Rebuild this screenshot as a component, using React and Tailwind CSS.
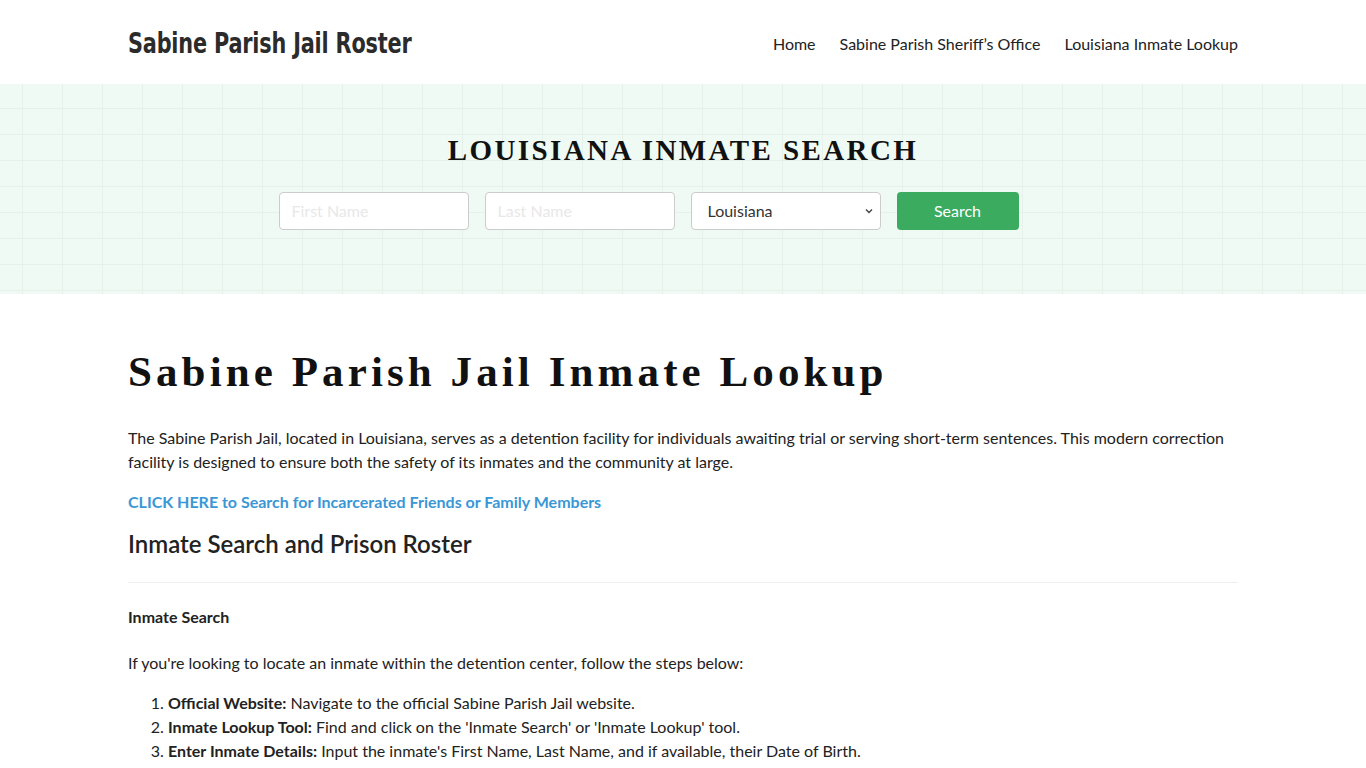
import React from 'react';

const lato = { fontFamily: 'Lato, "Open Sans", sans-serif' };

function Header() {
  return (
    <header className="h-[84px] bg-white">
      <div className="mx-auto flex h-full w-[1110px] items-center justify-between pt-[3px]">
        <div className="origin-left scale-x-[0.825] whitespace-nowrap font-['DejaVu_Sans_Condensed',sans-serif] text-[28px] font-bold tracking-[-0.2px] text-[#2b2b2b]">
          Sabine Parish Jail Roster
        </div>
        <nav className="flex items-center gap-6 text-[16px] text-[#222]">
          <a href="#">Home</a>
          <a href="#">Sabine Parish Sheriff’s Office</a>
          <a href="#">Louisiana Inmate Lookup</a>
        </nav>
      </div>
    </header>
  );
}

function Hero() {
  return (
    <section className="h-[210px] bg-[#eefaf3] bg-[linear-gradient(#e4f2ea_1px,transparent_1px),linear-gradient(90deg,#e4f2ea_1px,transparent_1px)] bg-[size:40px_26px] bg-[position:-18px_-2px]">
      <div className="flex flex-col items-center pt-[45px]">
        <h2 className="font-['Liberation_Serif',serif] text-[29px] font-bold tracking-[2.4px] text-[#111]">
          LOUISIANA INMATE SEARCH
        </h2>
        <form className="mr-[69px] mt-[19px] flex gap-4" onSubmit={(e) => e.preventDefault()}>
          <input
            placeholder="First Name"
            className="h-[38px] w-[190px] rounded border border-[#ccc] bg-white px-3 text-[16px] placeholder:text-[#e8e8e8]"
          />
          <input
            placeholder="Last Name"
            className="h-[38px] w-[190px] rounded border border-[#ccc] bg-white px-3 text-[16px] placeholder:text-[#e8e8e8]"
          />
          <div className="relative h-[38px] w-[190px] rounded border border-[#ccc] bg-white">
            <span className="absolute left-4 top-1/2 -translate-y-1/2 text-[16px] text-[#333]">Louisiana</span>
            <svg className="absolute right-[6px] top-1/2 -translate-y-1/2" width="10" height="10" viewBox="0 0 10 10">
              <path d="M2 3.5 L5 6.5 L8 3.5" fill="none" stroke="#444" strokeWidth="1.4" />
            </svg>
          </div>
          <button className="h-[38px] w-[122px] rounded bg-[#3aab5f] text-[16px] text-white">Search</button>
        </form>
      </div>
    </section>
  );
}

function Content() {
  return (
    <main className="mx-auto w-[1110px] pt-[54px] text-[16px] leading-[24px] text-[#222]">
      <h1 className="font-['Liberation_Serif',serif] text-[43px] font-bold leading-[48px] tracking-[4.1px] text-[#111]">
        Sabine Parish Jail Inmate Lookup
      </h1>
      <p className="mt-[30px]">
        The Sabine Parish Jail, located in Louisiana, serves as a detention facility for individuals awaiting trial or serving short-term sentences. This modern correction facility is designed to ensure both the safety of its inmates and the community at large.
      </p>
      <p className="mt-4">
        <a href="#" className="font-bold text-[#3a97d6]">CLICK HERE to Search for Incarcerated Friends or Family Members</a>
      </p>
      <h3 className="mt-[14px] text-[24px] font-semibold leading-[32px] text-[#222]">Inmate Search and Prison Roster</h3>
      <hr className="mt-[22px] border-t border-[#eee]" />
      <p className="mt-[22px] font-bold">Inmate Search</p>
      <p className="mt-[22px]">If you're looking to locate an inmate within the detention center, follow the steps below:</p>
      <ol className="mt-[16px] list-decimal pl-10">
        <li><b>Official Website:</b> Navigate to the official Sabine Parish Jail website.</li>
        <li><b>Inmate Lookup Tool:</b> Find and click on the 'Inmate Search' or 'Inmate Lookup' tool.</li>
        <li><b>Enter Inmate Details:</b> Input the inmate's First Name, Last Name, and if available, their Date of Birth.</li>
      </ol>
    </main>
  );
}

export default function App() {
  return (
    <div style={lato} className="min-h-screen bg-white">
      <Header />
      <Hero />
      <Content />
    </div>
  );
}
